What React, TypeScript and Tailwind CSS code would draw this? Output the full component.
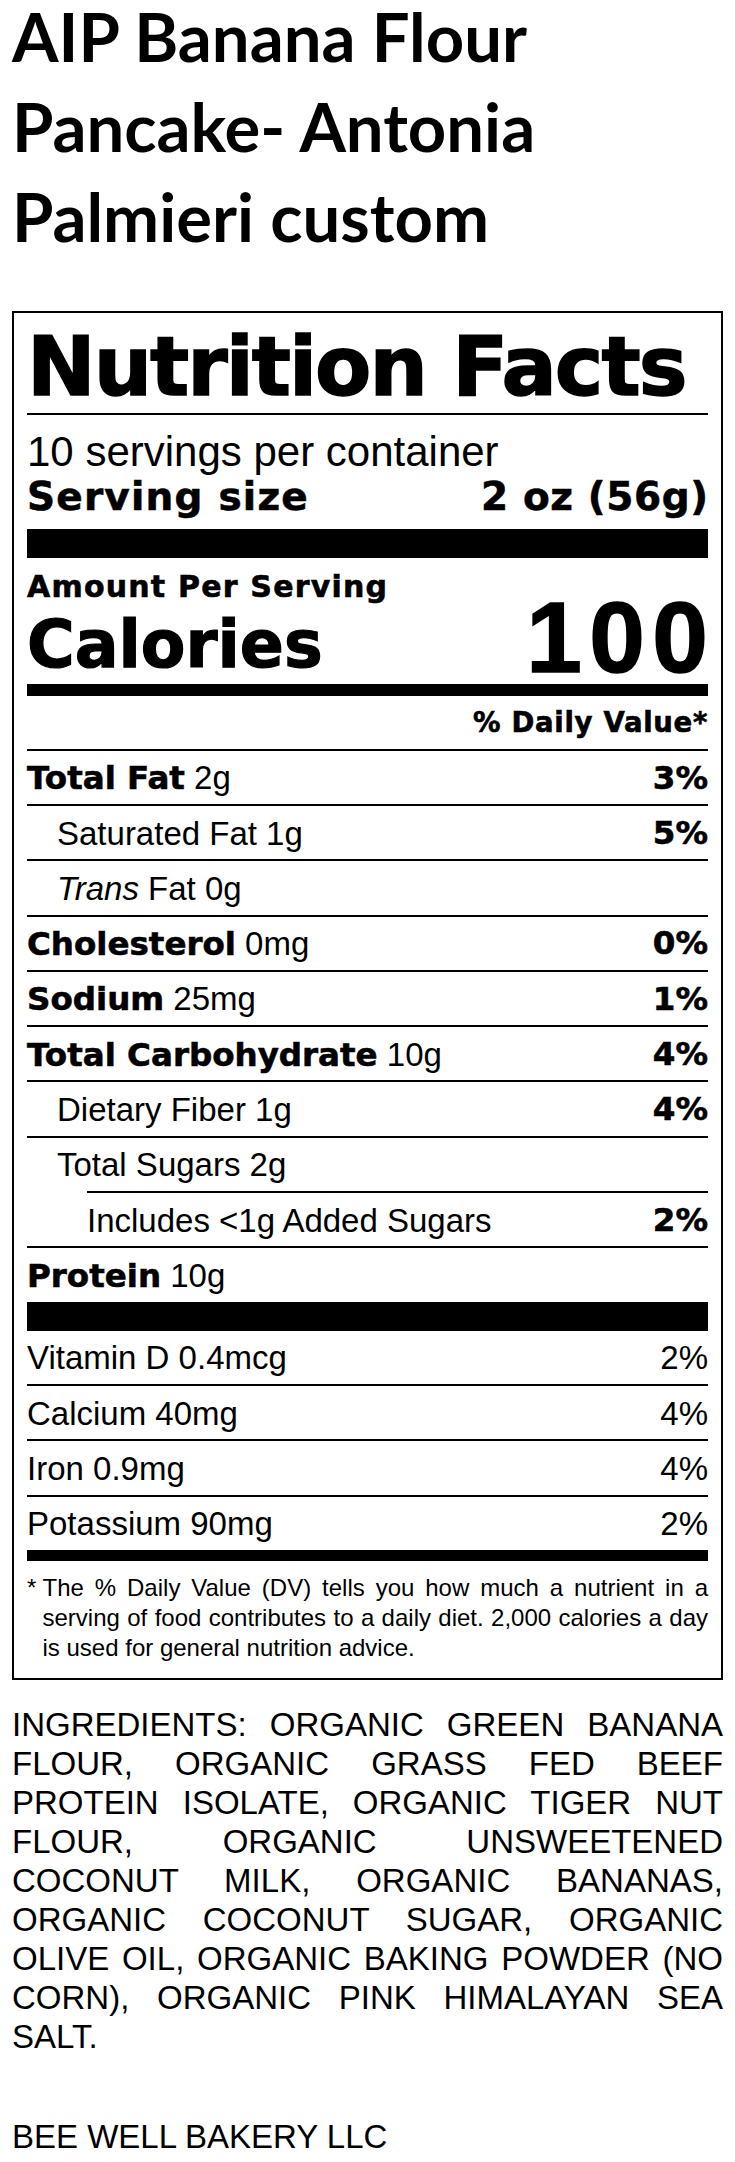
import React from 'react';

const heavy = "font-['DejaVu_Sans',sans-serif] font-bold";
const stroke = '[-webkit-text-stroke:0.6px_black]';

interface RowProps {
  children: React.ReactNode;
  dv?: string;
  dvBold?: boolean;
  level?: 0 | 1 | 2;
  border?: boolean;
}

function Row({ children, dv, dvBold = true, level = 0, border = true }: RowProps) {
  return (
    <div
      className={`flex items-center justify-between pt-[1px] ${
        border ? 'h-[55.3px] border-t-2 border-black' : 'h-[53.3px]'
      } ${level === 2 ? 'ml-[60px]' : ''}`}
    >
      <div className={`text-[33px] leading-none ${level === 1 ? 'pl-[30px]' : ''}`}>{children}</div>
      {dv && (
        <span className={dvBold ? `${heavy} ${stroke} text-[32.5px] leading-none` : 'text-[33px] leading-none'}>
          {dv}
        </span>
      )}
    </div>
  );
}

function B({ children }: { children: React.ReactNode }) {
  return <span className={`${heavy} ${stroke} text-[32.5px]`}>{children}</span>;
}

export default function App() {
  return (
    <div className="bg-white px-[12px] text-black font-['Liberation_Sans',Arial,sans-serif]">
      <h1 className="-mt-[9px] font-['Lato',sans-serif] text-[67px] font-bold leading-[90px]">
        AIP Banana Flour Pancake- Antonia Palmieri custom
      </h1>

      <div className="mt-[50px] border-2 border-black px-[13px] pt-[13px] pb-[15.6px]">
        <h2
          className={`${heavy} text-[82px] leading-[82px] tracking-[-2px] whitespace-nowrap [-webkit-text-stroke:1.5px_black]`}
        >
          Nutrition Facts
        </h2>
        <div className="mt-[5px] h-[2px] bg-black" />
        <p className="mt-[13.5px] text-[42px] leading-[46px]">10 servings per container</p>
        <div
          className={`mt-[2.5px] flex h-[38px] items-center justify-between ${heavy} ${stroke} text-[39px] leading-none`}
        >
          <span className="tracking-[1.2px]">Serving size</span>
          <span className="-mr-[0.6px] tracking-[0.6px]">2 oz (56g)</span>
        </div>
        <div className="mt-[13.6px] h-[29px] bg-black" />

        <p className={`mt-[16px] h-[26px] ${heavy} ${stroke} text-[30px] leading-[26px] tracking-[1.2px]`}>
          Amount Per Serving
        </p>
        <div className="-mt-[2px] flex items-end justify-between">
          <span className={`${heavy} text-[65px] leading-[62px] [-webkit-text-stroke:1.2px_black]`}>Calories</span>
          <span className="-mr-[7.5px] text-[100px] font-bold leading-[78px] tracking-[7.5px] [-webkit-text-stroke:1.5px_black]">
            100
          </span>
        </div>
        <div className="mt-[8.8px] h-[12px] bg-black" />

        <p
          className={`mt-[10.2px] h-[30px] text-right ${heavy} ${stroke} text-[27.5px] leading-[30px] tracking-[0.7px]`}
        >
          % Daily Value*
        </p>

        <div className="mt-[12.1px]">
          <Row dv="3%">
            <B>Total Fat</B> 2g
          </Row>
          <Row dv="5%" level={1}>
            Saturated Fat 1g
          </Row>
          <Row level={1}>
            <i>Trans</i> Fat 0g
          </Row>
          <Row dv="0%">
            <B>Cholesterol</B> 0mg
          </Row>
          <Row dv="1%">
            <B>Sodium</B> 25mg
          </Row>
          <Row dv="4%">
            <B>Total Carbohydrate</B> 10g
          </Row>
          <Row dv="4%" level={1}>
            Dietary Fiber 1g
          </Row>
          <Row level={1}>Total Sugars 2g</Row>
          <Row dv="2%" level={2}>
            Includes &lt;1g Added Sugars
          </Row>
          <Row>
            <B>Protein</B> 10g
          </Row>
        </div>
        <div className="h-[29px] bg-black" />

        <Row dv="2%" dvBold={false} border={false}>
          Vitamin D 0.4mcg
        </Row>
        <Row dv="4%" dvBold={false}>
          Calcium 40mg
        </Row>
        <Row dv="4%" dvBold={false}>
          Iron 0.9mg
        </Row>
        <Row dv="2%" dvBold={false}>
          Potassium 90mg
        </Row>
        <div className="h-[11px] bg-black" />

        <div className="mt-[11.9px] flex text-[24px] leading-[30px]">
          <span className="w-[15.5px] shrink-0">*</span>
          <p className="flex-1 text-justify">
            The % Daily Value (DV) tells you how much a nutrient in a serving of food contributes to a daily diet. 2,000
            calories a day is used for general nutrition advice.
          </p>
        </div>
      </div>

      <p className="mt-[24.8px] text-justify text-[33px] leading-[39px]">
        INGREDIENTS: ORGANIC GREEN BANANA FLOUR, ORGANIC GRASS FED BEEF PROTEIN ISOLATE, ORGANIC TIGER NUT FLOUR,
        ORGANIC UNSWEETENED COCONUT MILK, ORGANIC BANANAS, ORGANIC COCONUT SUGAR, ORGANIC OLIVE OIL, ORGANIC BAKING
        POWDER (NO CORN), ORGANIC PINK HIMALAYAN SEA SALT.
      </p>
      <p className="mt-[60.6px] text-[33px] leading-[39px]">BEE WELL BAKERY LLC</p>
    </div>
  );
}
